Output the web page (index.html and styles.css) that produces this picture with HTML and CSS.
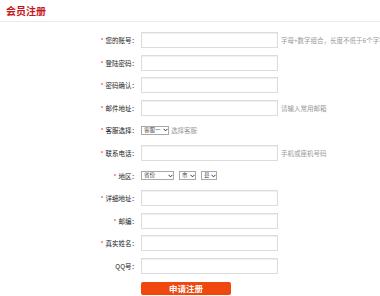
FILE: index.html
```html
<!DOCTYPE html>
<html lang="zh-CN">
<head>
    <meta charset="UTF-8">
    <title>会员注册</title>
    <link rel="stylesheet" href="styles.css">
</head>
<body>
    <div class="reg-header">
        <h2 class="reg-title">会员注册</h2>
    </div>

    <form class="reg-form">
        <div class="row">
            <label class="label"><em>*</em>您的账号：</label>
            <input type="text" class="text-input">
            <span class="tip">字母+数字组合，长度不低于6个字符</span>
        </div>
        <div class="row">
            <label class="label"><em>*</em>登陆密码：</label>
            <input type="password" class="text-input">
        </div>
        <div class="row">
            <label class="label"><em>*</em>密码确认：</label>
            <input type="password" class="text-input">
        </div>
        <div class="row">
            <label class="label"><em>*</em>邮件地址：</label>
            <input type="text" class="text-input">
            <span class="tip">请输入常用邮箱</span>
        </div>
        <div class="row">
            <label class="label"><em>*</em>客服选择：</label>
            <span class="select-wrap">
                <select class="small-select sel-service">
                    <option>客服一</option>
                    <option>客服二</option>
                </select>
                <svg class="arrow" viewBox="0 0 6 4"><path d="M0.6 0.6 L3 3 L5.4 0.6" /></svg>
            </span>
            <span class="tip tip-near">选择客服</span>
        </div>
        <div class="row">
            <label class="label"><em>*</em>联系电话：</label>
            <input type="text" class="text-input">
            <span class="tip">手机或座机号码</span>
        </div>
        <div class="row">
            <label class="label"><em>*</em>地区：</label>
            <div class="area">
                <span class="select-wrap">
                    <select class="small-select sel-province"><option>省份</option></select>
                    <svg class="arrow" viewBox="0 0 6 4"><path d="M0.6 0.6 L3 3 L5.4 0.6" /></svg>
                </span>
                <span class="select-wrap">
                    <select class="small-select sel-city"><option>市</option></select>
                    <svg class="arrow" viewBox="0 0 6 4"><path d="M0.6 0.6 L3 3 L5.4 0.6" /></svg>
                </span>
                <span class="select-wrap">
                    <select class="small-select sel-county"><option>县</option></select>
                    <svg class="arrow" viewBox="0 0 6 4"><path d="M0.6 0.6 L3 3 L5.4 0.6" /></svg>
                </span>
            </div>
        </div>
        <div class="row">
            <label class="label"><em>*</em>详细地址：</label>
            <input type="text" class="text-input">
        </div>
        <div class="row">
            <label class="label"><em>*</em>邮编：</label>
            <input type="text" class="text-input">
        </div>
        <div class="row">
            <label class="label"><em>*</em>真实姓名：</label>
            <input type="text" class="text-input">
        </div>
        <div class="row">
            <label class="label">QQ号：</label>
            <input type="text" class="text-input">
        </div>
        <div class="row">
            <span class="label"></span>
            <button type="button" class="submit-btn">申请注册</button>
        </div>
    </form>
</body>
</html>
```

FILE: styles.css
```css
body {
    margin: 0;
    font-family: "Noto Sans CJK SC", "Liberation Sans", sans-serif;
    background: #fff;
    color: #333;
    overflow: hidden;
}

.reg-header {
    height: 21px;
    border-bottom: 1px solid #ebebeb;
    padding-left: 6px;
}

.reg-title {
    margin: 0;
    font-size: 10px;
    line-height: 22px;
    font-weight: bold;
    color: #c8161d;
}

.reg-form {
    padding-top: 7px;
    display: grid;
    grid-auto-rows: 22.55px;
}

.row {
    display: flex;
    align-items: center;
    white-space: nowrap;
}

.label {
    width: 138px;
    flex-shrink: 0;
    margin-right: 3px;
    text-align: right;
    font-size: 6.5px;
    color: #222;
}

.label em {
    font-style: normal;
    color: #e4393c;
    margin-right: 2px;
}

.text-input {
    width: 137px;
    height: 16px;
    box-sizing: border-box;
    border: 1px solid #dcdcdc;
    box-shadow: inset 0 1px 1px #f0f0f0;
    padding: 0 3px;
    margin: 0;
    font-size: 7px;
    outline: none;
}

.tip {
    margin-left: 3px;
    font-size: 6.5px;
    color: #999;
}

.tip-near {
    margin-left: 2px;
}

/* selects drawn by hand, arrow sits over the right end */
.select-wrap {
    position: relative;
    display: inline-block;
    height: 9px;
}

.small-select {
    appearance: none;
    -webkit-appearance: none;
    height: 9px;
    box-sizing: border-box;
    font-size: 5.5px;
    line-height: 7px;
    font-family: "Noto Sans CJK SC", sans-serif;
    color: #444;
    border: 1px solid #a9a9a9;
    border-radius: 0;
    padding: 0 0 0 2px;
    margin: 0;
    background: #fff;
    display: block;
    outline: none;
}

.arrow {
    position: absolute;
    right: 1.5px;
    top: 2.5px;
    width: 5px;
    height: 4px;
    fill: none;
    stroke: #222;
    stroke-width: 1.1;
    pointer-events: none;
}

.sel-service { width: 28px; }
.sel-province { width: 33px; }
.sel-city { width: 17px; }
.sel-county { width: 16px; }

.area {
    display: flex;
    gap: 5px;
}

.submit-btn {
    width: 90px;
    height: 13px;
    padding: 0;
    border: none;
    border-radius: 2px;
    background: #f0470f;
    color: #fff;
    font-family: "Noto Sans CJK SC", sans-serif;
    font-size: 8.5px;
    font-weight: bold;
    line-height: 13px;
    cursor: pointer;
}
```
